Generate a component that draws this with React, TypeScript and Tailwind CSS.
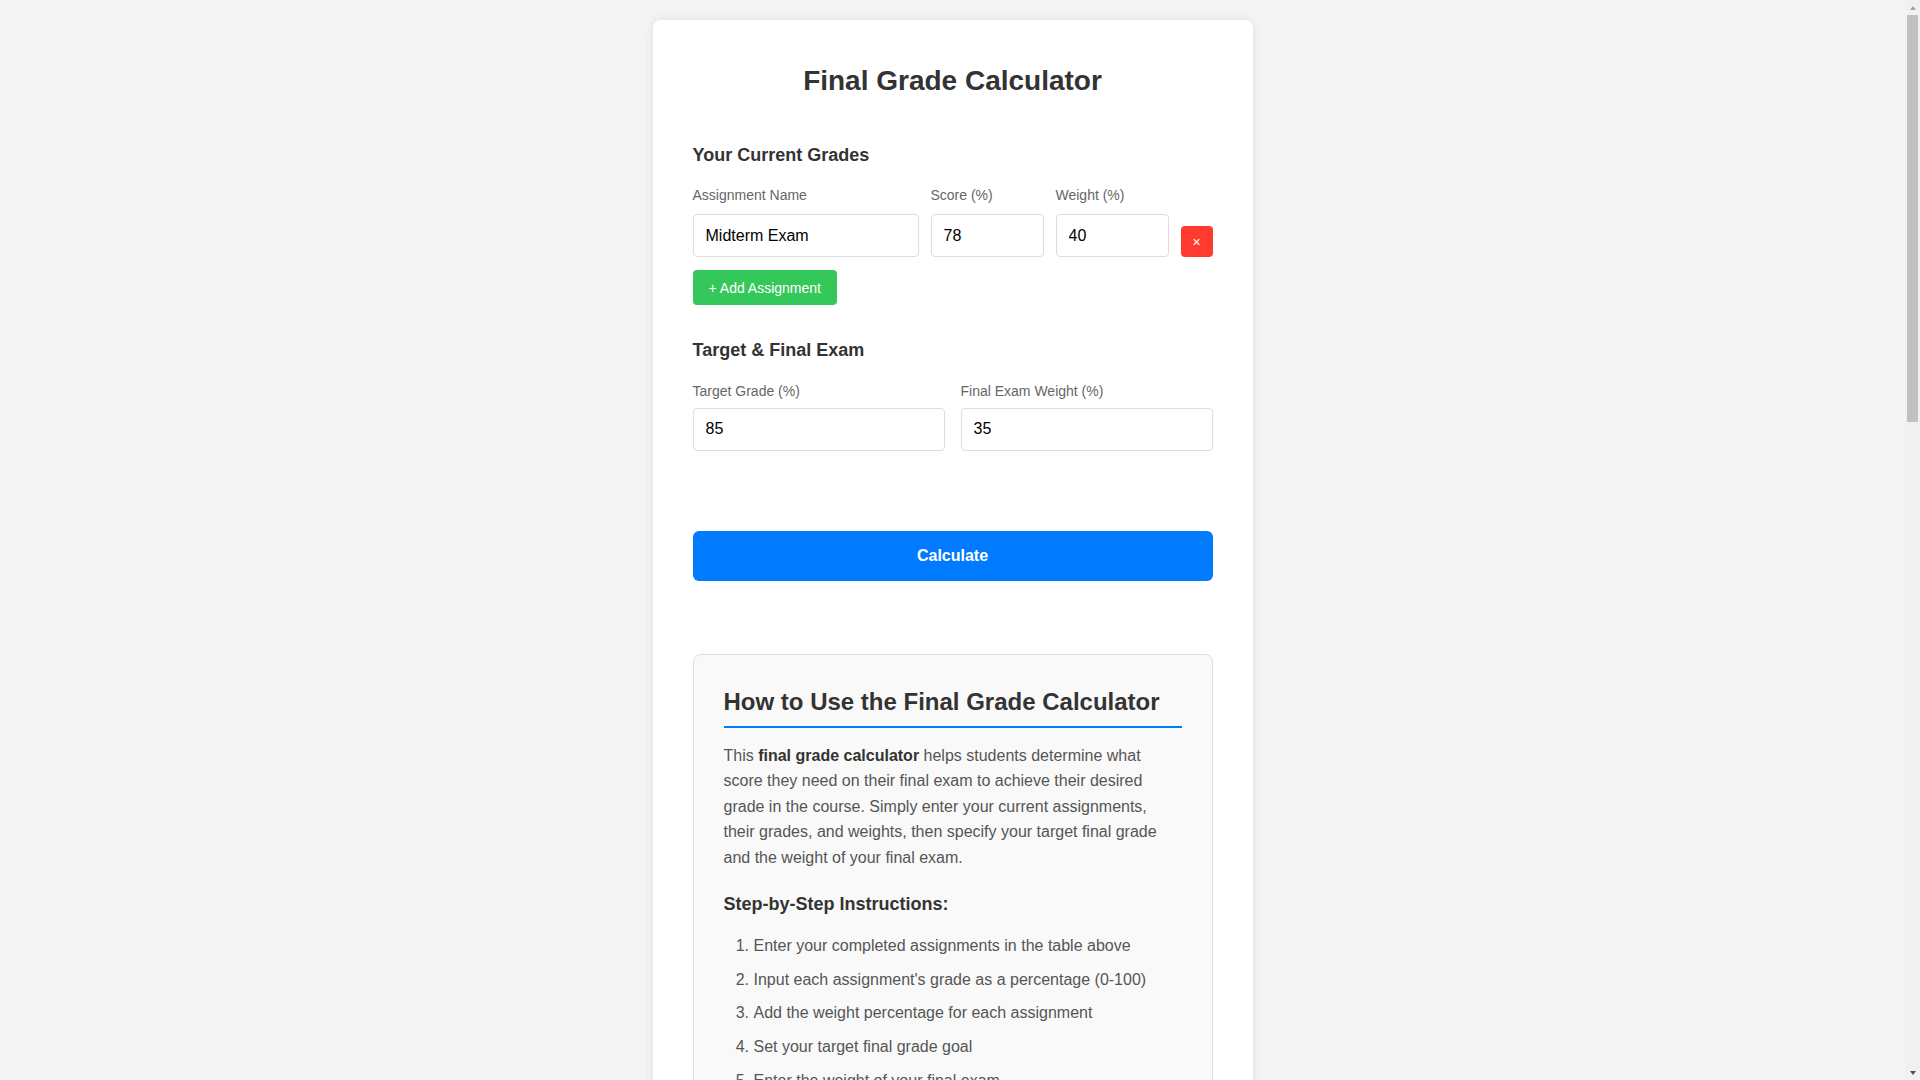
import { useState } from 'react'

type Assignment = { id: number; name: string; score: string; weight: string }

const steps = [
  'Enter your completed assignments in the table above',
  "Input each assignment's grade as a percentage (0-100)",
  'Add the weight percentage for each assignment',
  'Set your target final grade goal',
  'Enter the weight of your final exam',
  'Click "Calculate" to see the score you need',
]

const sections = [
  {
    title: 'Understanding Weighted Grades',
    body: [
      'Most courses do not treat every assignment equally. Each category of work is given a weight that reflects how much it contributes to your overall grade, so your final grade is a weighted average of everything you have completed plus the final exam.',
      'This calculator adds up the weighted points you have already earned and works out how many points the final exam needs to supply.',
    ],
  },
  {
    title: 'The Final Grade Formula',
    body: [
      'Required Score = (Target Grade − Current Grade × (1 − Final Weight)) ÷ Final Weight. Your current grade is the sum of each score multiplied by its weight, divided by the total weight of completed work.',
      'If the result is above 100%, the target cannot be reached with the final exam alone.',
    ],
  },
  {
    title: 'Example Calculation',
    body: [
      'Suppose you scored 78% on a midterm worth 40%, your final exam is worth 35%, and you want to finish with an 85%. The calculator combines these values to show the exact percentage you need on the final exam to reach your goal.',
      'Try changing the target grade or adding assignments to see how each piece of coursework affects the result.',
    ],
  },
  {
    title: 'Tips for Using Your Results',
    body: [
      'Use the required score to plan your study time. If you need a very high mark, start reviewing early and focus on the topics with the greatest weight.',
      'Rounding policies, extra credit and curved grading can change the final outcome, so check your course syllabus when in doubt.',
    ],
  },
]

const inputCls = 'h-[43px] w-full rounded border border-[#ddd] px-3 text-base text-black outline-none'

function Scrollbar() {
  return (
    <div className="flex w-[15px] shrink-0 flex-col bg-[#f1f1f1]">
      <div className="flex h-[15px] items-center justify-center">
        <div className="h-0 w-0 border-x-[3.5px] border-b-[4px] border-x-transparent border-b-[#a3a3a3]" />
      </div>
      <div className="mx-[2px] h-[407px] bg-[#c1c1c1]" />
      <div className="flex-1" />
      <div className="flex h-[15px] items-center justify-center">
        <div className="h-0 w-0 border-x-[3.5px] border-t-[4px] border-x-transparent border-t-[#505050]" />
      </div>
    </div>
  )
}

export default function App() {
  const [rows, setRows] = useState<Assignment[]>([
    { id: 1, name: 'Midterm Exam', score: '78', weight: '40' },
  ])

  const addRow = () =>
    setRows([...rows, { id: Date.now(), name: '', score: '', weight: '' }])

  return (
    <div className="flex h-screen bg-[#f4f4f4] font-['Liberation_Sans',Arial,Helvetica,sans-serif] text-[#333]">
      <div className="min-w-0 flex-1 overflow-y-auto py-5 [scrollbar-width:none]">
        <div className="mx-auto w-[600px] rounded-lg bg-white px-10 pt-[44px] pb-10 shadow-[0_0_10px_rgba(0,0,0,0.1)]">
          <h1 className="mb-[47px] text-center text-[28px] font-bold leading-[33.6px] text-[#333]">
            Final Grade Calculator
          </h1>

          <h2 className="mb-[21px] text-lg font-bold leading-[21.6px] text-[#333]">Your Current Grades</h2>

          {rows.map((r, i) => (
            <div key={r.id} className="mb-[13px] grid grid-cols-[2fr_1fr_1fr_auto] items-end gap-3">
              <div>
                {i === 0 && (
                  <label className="mb-[11px] block text-sm leading-4 text-[#666]">Assignment Name</label>
                )}
                <input type="text" defaultValue={r.name} className={inputCls} />
              </div>
              <div>
                {i === 0 && <label className="mb-[11px] block text-sm leading-4 text-[#666]">Score (%)</label>}
                <input type="text" defaultValue={r.score} className={inputCls} />
              </div>
              <div>
                {i === 0 && <label className="mb-[11px] block text-sm leading-4 text-[#666]">Weight (%)</label>}
                <input type="text" defaultValue={r.weight} className={inputCls} />
              </div>
              <button
                onClick={() => setRows(rows.filter((x) => x.id !== r.id))}
                className="flex h-[31px] w-8 items-center justify-center rounded bg-[#ff3b30] text-sm text-white"
              >
                ×
              </button>
            </div>
          ))}

          <button onClick={addRow} className="h-[35px] rounded bg-[#34c759] px-4 text-sm text-white">
            + Add Assignment
          </button>

          <h2 className="mt-[35px] mb-[21px] text-lg font-bold leading-[21.6px] text-[#333]">Target &amp; Final Exam</h2>

          <div className="grid grid-cols-2 gap-4">
            <div>
              <label className="mb-[9px] block text-sm leading-4 text-[#666]">Target Grade (%)</label>
              <input type="text" defaultValue="85" className={inputCls} />
            </div>
            <div>
              <label className="mb-[9px] block text-sm leading-4 text-[#666]">Final Exam Weight (%)</label>
              <input type="text" defaultValue="35" className={inputCls} />
            </div>
          </div>

          <button className="mt-20 h-[50px] w-full rounded-md bg-[#007aff] text-base font-bold text-white">
            Calculate
          </button>

          <div className="mt-[73px] rounded-lg border border-[#ddd] bg-[#f9f9f9] px-[30px] pt-[33px] pb-[30px]">
            <h2 className="border-b-2 border-[#007aff] pb-[9px] text-2xl font-bold leading-[28.8px] text-[#333]">
              How to Use the Final Grade Calculator
            </h2>
            <p className="mt-[15px] text-base leading-[25.6px] text-[#555]">
              This <strong className="text-[#333]">final grade calculator</strong> helps students determine what
              score they need on their final exam to achieve their desired grade in the course. Simply enter your
              current assignments, their grades, and weights, then specify your target final grade and the weight
              of your final exam.
            </p>

            <h3 className="mt-[23px] text-lg font-bold leading-[21.6px] text-[#333]">Step-by-Step Instructions:</h3>
            <ol className="mt-[18px] list-decimal pl-[30px] text-base leading-[25.6px] text-[#555]">
              {steps.map((s) => (
                <li key={s} className="mb-2">
                  {s}
                </li>
              ))}
            </ol>

            {sections.map((sec) => (
              <div key={sec.title}>
                <h3 className="mt-[30px] text-lg font-bold leading-[21.6px] text-[#333]">{sec.title}</h3>
                {sec.body.map((para, j) => (
                  <p key={j} className="mt-[15px] text-base leading-[25.6px] text-[#555]">
                    {para}
                  </p>
                ))}
              </div>
            ))}
          </div>
        </div>
      </div>
      <Scrollbar />
    </div>
  )
}
